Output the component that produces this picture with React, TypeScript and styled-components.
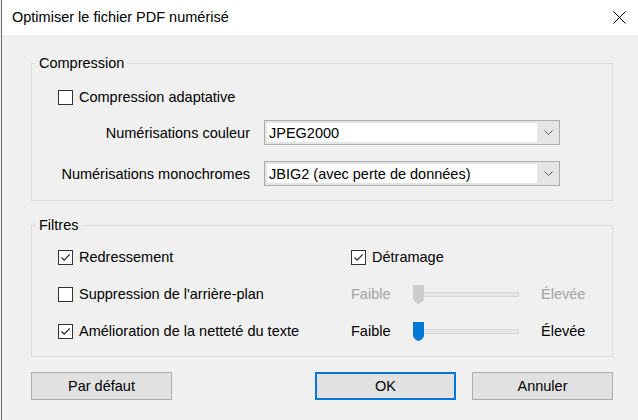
import styled, { createGlobalStyle } from 'styled-components'

const GlobalStyle = createGlobalStyle`
  html, body {
    margin: 0;
    padding: 0;
    background: #f0f0f0;
  }

  #root {
    width: 638px;
    height: 420px;
    overflow: hidden;
  }
`

const Window = styled.div`
  display: flex;
  flex-direction: column;
  width: 637px;
  height: 420px;
  margin-left: 1px;
  border-left: 1px solid #6f6f6f;
  box-sizing: border-box;
  background: #f0f0f0;
  font-family: 'Liberation Sans', Arial, sans-serif;
  font-size: 14.5px;
  color: #000;
`

const TitleBar = styled.div`
  display: flex;
  align-items: center;
  justify-content: space-between;
  height: 35px;
  flex: none;
  padding: 0 12px 0 10px;
  background: #fff;
`

const Title = styled.span`
  font-size: 14.5px;
  line-height: 35px;
`

const Content = styled.div`
  display: flex;
  flex-direction: column;
  padding: 20px 0 0 29px;
`

const GroupBox = styled.fieldset<{ $gap?: number }>`
  width: 582px;
  box-sizing: border-box;
  margin: ${p => p.$gap ?? 0}px 0 0 0;
  padding: 0;
  min-inline-size: 0;
  border: 1px solid #dcdcdc;
`

const GroupTitle = styled.legend`
  margin-left: 4px;
  padding: 0 3px;
  line-height: 17px;
`

const GroupBody = styled.div<{ $top: number; $bottom: number }>`
  display: flex;
  flex-direction: column;
  padding: ${p => p.$top}px 0 ${p => p.$bottom}px 26px;
`

const CheckRow = styled.label`
  display: flex;
  align-items: center;
  gap: 6px;
  height: 24px;
  white-space: nowrap;
`

const Box = styled.span`
  display: flex;
  align-items: center;
  justify-content: center;
  width: 15px;
  height: 15px;
  box-sizing: border-box;
  border: 1px solid #333;
  background: #fff;
  flex: none;
`

const FieldGrid = styled.div`
  display: grid;
  grid-template-columns: 192px 296px;
  column-gap: 14px;
  row-gap: 16px;
  align-items: center;
  margin-top: 11px;
`

const FieldLabel = styled.span`
  justify-self: end;
  white-space: nowrap;
`

const Combo = styled.div`
  display: flex;
  height: 25px;
  box-sizing: border-box;
  padding: 2px 0 2px 2px;
  border: 1px solid #adadad;
  background: #e5e5e5;
`

const ComboValue = styled.span`
  flex: 1;
  display: flex;
  align-items: center;
  padding-left: 2px;
  background: #fff;
  white-space: nowrap;
`

const ComboArrow = styled.span`
  display: flex;
  align-items: center;
  justify-content: center;
  width: 22px;
`

const FilterGrid = styled.div`
  display: grid;
  grid-template-columns: 293px auto;
  row-gap: 13px;
`

const SliderRow = styled.div<{ $disabled?: boolean }>`
  display: grid;
  grid-template-columns: 62px 106px auto;
  align-items: center;
  height: 24px;
  color: ${p => (p.$disabled ? '#a3a3a3' : '#000')};
`

const HighLabel = styled.span`
  margin-left: 22px;
`

const Slider = styled.div`
  position: relative;
  width: 106px;
  height: 19px;
`

const Track = styled.div`
  margin-top: 7px;
  height: 5px;
  box-sizing: border-box;
  border: 1px solid #d6d6d6;
  background: #e7e7e7;
`

const Thumb = styled.svg`
  position: absolute;
  left: 0;
  top: 0;
`

const ButtonRow = styled.div`
  display: flex;
  justify-content: space-between;
  width: 582px;
  margin-top: 15px;
`

const ButtonGroup = styled.div`
  display: flex;
  gap: 16px;
`

const Button = styled.button<{ $default?: boolean }>`
  width: 141px;
  height: 28px;
  box-sizing: border-box;
  padding: 0;
  border: ${p => (p.$default ? '2px solid #0078d7' : '1px solid #adadad')};
  background: #e1e1e1;
  font-family: inherit;
  font-size: 14.5px;
  color: #000;
`

function Checkbox({ label, checked }: { label: string; checked?: boolean }) {
  return (
    <CheckRow>
      <Box>
        {checked && (
          <svg width='13' height='13' viewBox='0 0 13 13'>
            <polyline
              points='2.5,6.5 5.2,9.2 10.8,3.3'
              fill='none'
              stroke='#222'
              strokeWidth='1.1'
            />
          </svg>
        )}
      </Box>
      {label}
    </CheckRow>
  )
}

function Select({ value }: { value: string }) {
  return (
    <Combo>
      <ComboValue>{value}</ComboValue>
      <ComboArrow>
        <svg width='9' height='5' viewBox='0 0 9 5'>
          <polyline points='0.5,0.5 4.5,4.5 8.5,0.5' fill='none' stroke='#555' />
        </svg>
      </ComboArrow>
    </Combo>
  )
}

function Level({ disabled }: { disabled?: boolean }) {
  return (
    <SliderRow $disabled={disabled}>
      <span>Faible</span>
      <Slider>
        <Track />
        <Thumb width='11' height='19' viewBox='0 0 11 19'>
          <path
            d='M0 0 H11 V13 Q11 16 7 18.5 Q5.5 19.3 4 18.5 Q0 16 0 13 Z'
            fill={disabled ? '#cccccc' : '#0078d7'}
          />
        </Thumb>
      </Slider>
      <HighLabel>Élevée</HighLabel>
    </SliderRow>
  )
}

export default function App() {
  return (
    <>
      <GlobalStyle />
      <Window>
        <TitleBar>
          <Title>Optimiser le fichier PDF numérisé</Title>
          <svg width='13' height='13' viewBox='0 0 13 13'>
            <path d='M0.5 0.5 L12.5 12.5 M12.5 0.5 L0.5 12.5' stroke='#000' strokeWidth='1' />
          </svg>
        </TitleBar>
        <Content>
          <GroupBox>
            <GroupTitle>Compression</GroupTitle>
            <GroupBody $top={13} $bottom={14}>
              <Checkbox label='Compression adaptative' />
              <FieldGrid>
                <FieldLabel>Numérisations couleur</FieldLabel>
                <Select value='JPEG2000' />
                <FieldLabel>Numérisations monochromes</FieldLabel>
                <Select value='JBIG2 (avec perte de données)' />
              </FieldGrid>
            </GroupBody>
          </GroupBox>
          <GroupBox $gap={16}>
            <GroupTitle>Filtres</GroupTitle>
            <GroupBody $top={11} $bottom={13}>
              <FilterGrid>
                <Checkbox label='Redressement' checked />
                <Checkbox label='Détramage' checked />
                <Checkbox label="Suppression de l'arrière-plan" />
                <Level disabled />
                <Checkbox label='Amélioration de la netteté du texte' checked />
                <Level />
              </FilterGrid>
            </GroupBody>
          </GroupBox>
          <ButtonRow>
            <Button>Par défaut</Button>
            <ButtonGroup>
              <Button $default>OK</Button>
              <Button>Annuler</Button>
            </ButtonGroup>
          </ButtonRow>
        </Content>
      </Window>
    </>
  )
}
